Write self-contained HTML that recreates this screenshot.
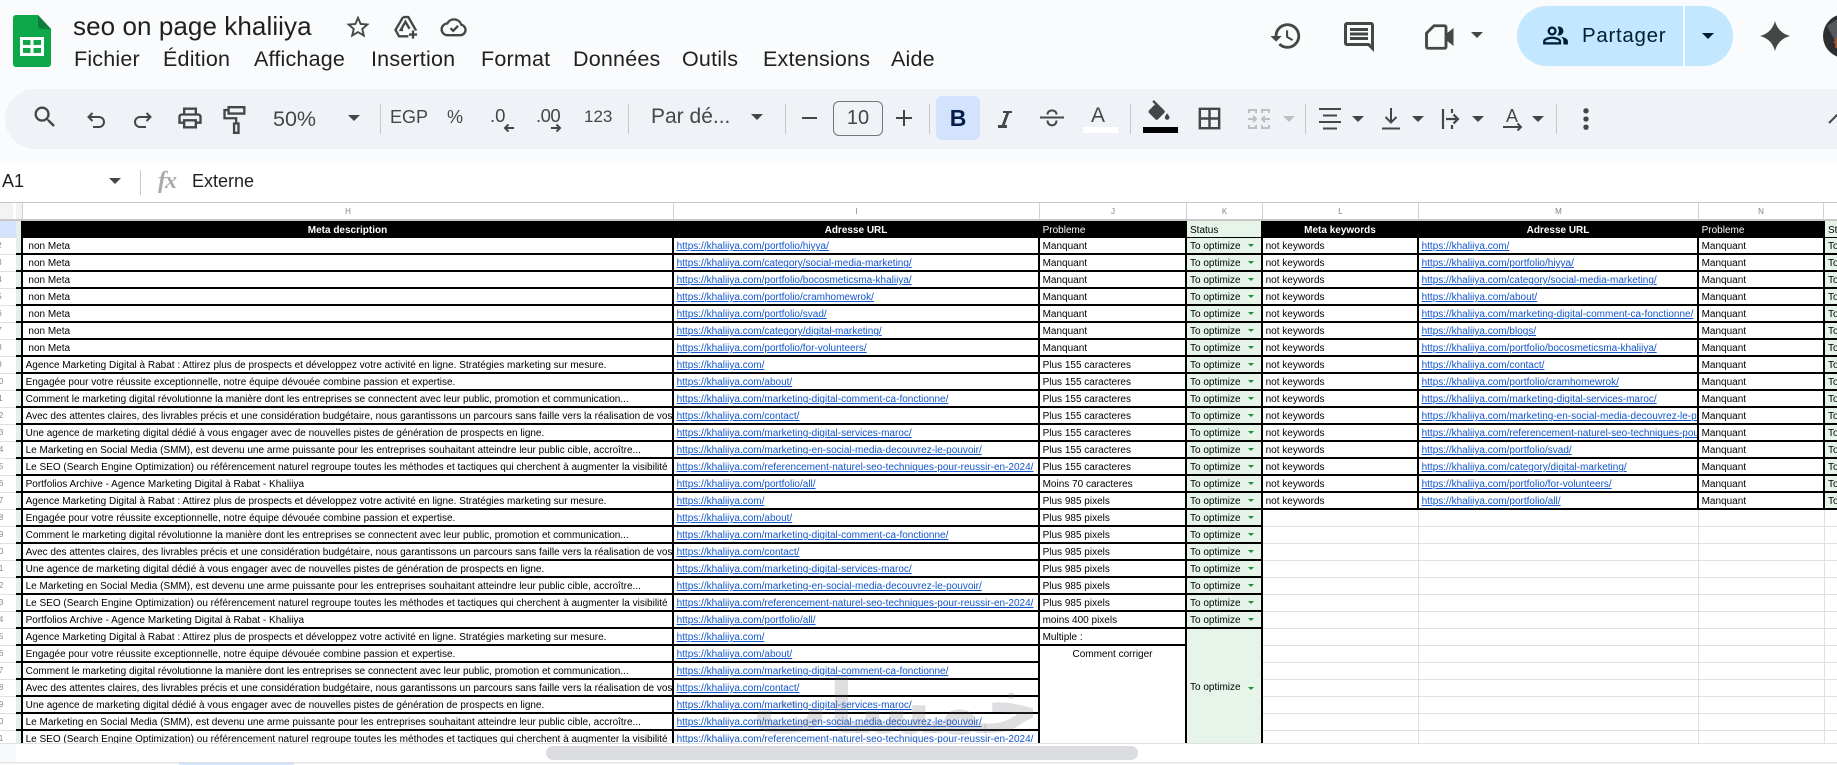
<!DOCTYPE html>
<html lang="fr"><head><meta charset="utf-8"><title>seo on page khaliiya</title>
<style>
*{box-sizing:border-box}
html,body{margin:0;padding:0;width:1837px;height:765px;overflow:hidden;background:#fff;font-family:"Liberation Sans",sans-serif;color:#1f1f1f}
.a{position:absolute;white-space:nowrap}
#top{position:absolute;left:0;top:0;width:1837px;height:161px;background:#f9fbfd}
#bar{position:absolute;left:5px;top:89px;width:1832px;height:60px;background:#eff3f8;border-radius:30px 0 0 30px}
.m{position:absolute;top:47px;font-size:21.5px;line-height:24px;letter-spacing:.2px;color:#1f1f1f}
svg{position:absolute;overflow:visible}
.f{fill:#444746}
.s{fill:none;stroke:#444746;stroke-width:2}
.c{position:absolute;width:0;height:0;border-left:6.5px solid transparent;border-right:6.5px solid transparent;border-top:6.5px solid #444746}
.sp{position:absolute;top:104px;width:1px;height:30px;background:#c7c7c7}
.t{position:absolute;color:#444746;line-height:24px;white-space:nowrap}
#ch{position:absolute;left:0;top:202px;width:1837px;height:19px;border-top:1px solid #c7c7c7;border-bottom:2px solid #c7c7c7;background:#fff}
.cl{position:absolute;top:0;height:16px;border-left:1px solid #d0d0d0;font-size:8px;line-height:17px;text-align:center;color:#7a8590}
#rh{position:absolute;left:0;top:221px;width:16px;height:522px;overflow:hidden;background:#fff}
#rh div{height:17px;border-bottom:1px solid #e0e0e0;font-size:8px;line-height:16px;color:#7d8a99;text-indent:-5.6px;overflow:hidden}
#rh div.o{text-indent:-2.8px}
#w{position:absolute;left:16px;top:221px;width:1821px;height:522px;overflow:hidden;background:#fff}
table{border-collapse:separate;border-spacing:0;table-layout:fixed;width:1909px;font-size:10px;line-height:13px;color:#000}
td{height:17px;padding:2px 0 0 2.6px;border-right:2px solid #000;border-bottom:2px solid #000;overflow:hidden;white-space:nowrap;vertical-align:top;position:relative}
td.g{padding:0;background:#e3f0e9}
td.hd{background:#000;color:#fff;border-bottom:0;font-weight:bold;text-align:center;padding:2px 0 0;line-height:15px}
td.hl{background:#000;color:#fff;border-bottom:0;font-weight:normal;text-align:left;line-height:15px}
td.hk{background:#e6f4ea;color:#000;border-bottom:1px solid #000;line-height:12px;padding:4px 0 0 3px}
td.k{background:#e6f4ea;line-height:12px;padding:3px 0 0 3px}
td.k i{position:absolute;right:7px;top:6px;width:0;height:0;border-left:3.2px solid transparent;border-right:3.2px solid transparent;border-top:3.5px solid #1e8e3e}
td.mk{vertical-align:middle;line-height:15px;padding:0 0 0 3px}
td.mk i{top:50%;margin-top:-1px}
td.n{padding-left:5.4px}
td.e{border-right:1px solid #e0e0e0;border-bottom:1px solid #e0e0e0}
td.cc{text-align:center;padding:2px 0 0}
a{color:#1155cc;text-decoration:underline}
</style></head><body>
<div id="top"></div><div id="bar"></div>

<!-- Logo -->
<svg style="left:13px;top:15px" width="38" height="52" viewBox="0 0 38 52"><path d="M3 0H25L38 14V49a3 3 0 0 1-3 3H3a3 3 0 0 1-3-3V3a3 3 0 0 1 3-3z" fill="#0ea84c"/><path d="M25 0L38 14H28a3 3 0 0 1-3-3z" fill="#0c7f3a"/><path d="M7 22H31V41H7z" fill="#fff"/><path d="M10 25H17.5V30H10zM20.500 25H28V30H20.500zM10 33H17.5V38H10zM20.500 33H28V38H20.500z" fill="#0ea84c"/></svg>
<div class="a" style="left:73px;top:10px;font-size:26px;line-height:32px;color:#1f1f1f;letter-spacing:.08px">seo on page khaliiya</div>
<svg style="left:344px;top:13px" width="28" height="28" viewBox="0 0 24 24"><path class="f" d="M22 9.240l-7.190-.62L12 2 9.190 8.630 2 9.240l5.460 4.730L5.820 21 12 17.270 18.180 21l-1.630-7.030L22 9.240zM12 15.400l-3.760 2.270 1-4.280-3.320-2.880 4.380-.38L12 6.100l1.710 4.040 4.380.38-3.320 2.880 1 4.280L12 15.400z"/></svg>
<svg style="left:392px;top:13px" width="28" height="28" viewBox="0 0 24 24"><path class="s" d="M9.500 3.500h4.500l6 10.500-1 0M9.500 3.500L3 14.500l3 5.500h8M9.500 3.500L6.800 8M9.500 14.500h-2l4-7 3.500 6M18 15v7M14.500 18.500h7"/></svg>
<svg style="left:440px;top:13px" width="28" height="28" viewBox="0 0 24 24"><path class="s" d="M6.500 19H17.500a4.500 4.500 0 0 0 .8-8.900A6.500 6.500 0 0 0 6.300 9 5 5 0 0 0 6.500 19zM9 13l2.300 2.300L15.500 11"/></svg>

<div class="m" style="left:74px">Fichier</div>
<div class="m" style="left:163px">Édition</div>
<div class="m" style="left:254px">Affichage</div>
<div class="m" style="left:371px">Insertion</div>
<div class="m" style="left:481px">Format</div>
<div class="m" style="left:573px">Données</div>
<div class="m" style="left:682px">Outils</div>
<div class="m" style="left:763px">Extensions</div>
<div class="m" style="left:891px">Aide</div>

<!-- right header -->
<svg style="left:1269px;top:19px" width="34" height="34" viewBox="0 0 24 24"><path class="f" d="M13 3c-4.970 0-9 4.030-9 9H1l3.890 3.890.07.14L9 12H6c0-3.870 3.130-7 7-7s7 3.130 7 7-3.130 7-7 7c-1.930 0-3.680-.79-4.940-2.060l-1.420 1.420C8.270 19.990 10.510 21 13 21c4.970 0 9-4.030 9-9s-4.030-9-9-9zm-1 5v5l4.280 2.540.72-1.210-3.500-2.080V8H12z"/></svg>
<svg style="left:1341px;top:19px" width="36" height="36" viewBox="0 0 24 24"><path class="f" d="M20 17.170L18.830 16H4V4h16v13.170zM20 2H4c-1.100 0-2 .9-2 2v12c0 1.100.9 2 2 2h14l4 4V4c0-1.100-.9-2-2-2z"/><path class="f" d="M6 12h12v2H6zm0-3h12v2H6zm0-3h12v2H6z"/></svg>
<svg style="left:1422px;top:19px" width="36" height="36" viewBox="0 0 24 24"><path class="s" style="stroke-width:1.900" d="M8 4.500H15a1 1 0 0 1 1 1V18.500a1 1 0 0 1-1 1H4a1 1 0 0 1-1-1V9.500z"/><path class="f" d="M16 10l5-4v12l-5-4z"/></svg>
<div class="c" style="left:1471px;top:32px"></div>

<div class="a" style="left:1517px;top:6px;width:216px;height:60px;border-radius:30px;background:#c2e7ff"></div>
<div class="a" style="left:1683px;top:6px;width:1.500px;height:60px;background:#f5fbff"></div>
<svg style="left:1542px;top:22px" width="27" height="27" viewBox="0 0 24 24"><path fill="#001d35" d="M16.670 13.130C18.040 14.060 19 15.320 19 17v3h4v-3c0-2.180-3.570-3.470-6.330-3.870zM15 12c2.210 0 4-1.790 4-4s-1.790-4-4-4c-.47 0-.91.1-1.330.24C14.500 5.270 15 6.580 15 8s-.5 2.730-1.330 3.760c.42.14.86.24 1.330.24zM9 12c2.210 0 4-1.790 4-4s-1.790-4-4-4-4 1.790-4 4 1.790 4 4 4zm0-6c1.100 0 2 .9 2 2s-.9 2-2 2-2-.9-2-2 .9-2 2-2zm0 7c-2.670 0-8 1.340-8 4v3h16v-3c0-2.660-5.330-4-8-4zm6 5H3v-.99C3.200 16.290 6.300 15 9 15s5.800 1.290 6 2v1z"/></svg>
<div class="a" style="left:1582px;top:22px;font-size:20.500px;line-height:28px;letter-spacing:.7px;color:#001d35">Partager</div>
<div class="c" style="left:1702px;top:33px;border-top-color:#001d35"></div>
<svg style="left:1760px;top:21px" width="30" height="30" viewBox="0 0 24 24"><path fill="#444746" d="M12 0Q14.500 9.500 24 12 14.500 14.500 12 24 9.500 14.500 0 12 9.500 9.500 12 0z"/></svg>
<svg style="left:1823px;top:14px" width="44" height="44" viewBox="0 0 44 44"><circle cx="22" cy="22" r="22" fill="#2c2e31"/><path d="M4 12l12-8 6 12-8 14z" fill="#55585c"/><path d="M10 28l8-6 2 12z" fill="#6a6d70"/><path d="M12 24h14v10H12z" fill="#a3512a"/></svg>

<!-- toolbar -->
<svg style="left:31px;top:103px" width="28" height="28" viewBox="0 0 24 24"><path class="f" d="M15.500 14h-.79l-.28-.27A6.471 6.471 0 0 0 16 9.500 6.500 6.500 0 1 0 9.500 16c1.610 0 3.090-.59 4.230-1.570l.27.28v.79l5 4.990L20.490 19l-4.990-5zm-6 0C7.010 14 5 11.990 5 9.500S7.010 5 9.500 5 14 7.010 14 9.500 11.990 14 9.500 14z"/></svg>
<svg style="left:84px;top:108px" width="24" height="24" viewBox="0 0 24 24"><path class="s" d="M8.500 5L4.500 9l4 4M4.500 9H15a5 5 0 0 1 0 10H9"/></svg>
<svg style="left:131px;top:108px" width="24" height="24" viewBox="0 0 24 24"><path class="s" d="M15.500 5l4 4-4 4M19.500 9H9a5 5 0 0 0 0 10h6"/></svg>
<svg style="left:176px;top:104px" width="28" height="28" viewBox="0 0 24 24"><path class="f" d="M19 8h-1V3H6v5H5c-1.660 0-3 1.340-3 3v6h4v4h12v-4h4v-6c0-1.660-1.340-3-3-3zM8 5h8v3H8V5zm8 12v2H8v-4h8v2zm2-2v-2H6v2H4v-4c0-.55.45-1 1-1h14c.55 0 1 .45 1 1v4h-2z"/></svg>
<svg style="left:221px;top:106px" width="28" height="28" viewBox="0 0 24 24"><path class="s" d="M6.500 1H20V6.500H6.500zM6.500 3.500H3V10.500H13V15M11.200 15H15V23H11.200z"/></svg>
<div class="t" style="left:273px;top:107px;font-size:21.500px">50%</div>
<div class="c" style="left:348px;top:115px"></div>
<div class="sp" style="left:380px"></div>
<div class="t" style="left:390px;top:105px;font-size:18px">EGP</div>
<div class="t" style="left:447px;top:105px;font-size:18px">%</div>
<div class="t" style="left:490px;top:104px;font-size:18.500px">.0</div>
<svg style="left:503px;top:122px" width="12" height="12" viewBox="0 0 12 12"><path class="s" d="M11 6H2M5.500 2.500L2 6l3.500 3.500"/></svg>
<div class="t" style="left:536px;top:104px;font-size:18.500px;letter-spacing:-.5px">.00</div>
<svg style="left:550px;top:122px" width="12" height="12" viewBox="0 0 12 12"><path class="s" d="M1 6h9M6.500 2.500L10 6 6.500 9.500"/></svg>
<div class="t" style="left:584px;top:105px;font-size:17px">123</div>
<div class="sp" style="left:628px"></div>
<div class="t" style="left:651px;top:105px;font-size:21px">Par dé...</div>
<div class="c" style="left:751px;top:114px"></div>
<div class="sp" style="left:785px"></div>
<div class="a" style="left:802px;top:117px;width:15px;height:2px;background:#444746"></div>
<div class="a" style="left:833px;top:101px;width:50px;height:35px;border:1px solid #747775;border-radius:6px;text-align:center;font-size:20px;line-height:33px;color:#444746">10</div>
<svg style="left:895px;top:109px" width="18" height="18" viewBox="0 0 18 18"><path class="s" d="M1 9h16M9 1v16"/></svg>
<div class="sp" style="left:929px"></div>
<div class="a" style="left:936px;top:96px;width:44px;height:44px;border-radius:6px;background:#d3e3fd;text-align:center;font-size:23px;font-weight:bold;line-height:44px;color:#041e49">B</div>
<svg style="left:993px;top:107px" width="24" height="24" viewBox="0 0 24 24"><path class="f" d="M10 4v2h3.210L8.790 18H5v3h9v-3h-2.210L16.210 6H19V4z"/></svg>
<svg style="left:1040px;top:106px" width="24" height="24" viewBox="0 0 24 24"><path class="s" d="M0 11.500H24M7.500 8.500C7.500 3 16.500 3 16.500 8.500M7.500 14.500C7.500 21 16.500 21 16.500 14.500"/></svg>
<div class="t" style="left:1091px;top:104px;font-size:21px">A</div>
<div class="a" style="left:1083px;top:127px;width:35px;height:6px;background:#fff"></div>
<div class="sp" style="left:1130px"></div>
<svg style="left:1145px;top:100px" width="28" height="28" viewBox="0 0 24 24"><path class="f" d="M16.560 8.940L7.620 0 6.210 1.410l2.380 2.380-5.150 5.150c-.59.59-.59 1.540 0 2.120l5.500 5.500c.29.29.68.44 1.060.44s.77-.15 1.060-.44l5.500-5.500c.59-.58.59-1.530 0-2.120zM19 11.500s-2 2.170-2 3.500c0 1.100.9 2 2 2s2-.9 2-2c0-1.330-2-3.500-2-3.500z"/></svg>
<div class="a" style="left:1143px;top:127px;width:35px;height:6px;background:#000"></div>
<svg style="left:1195px;top:104px" width="29" height="29" viewBox="0 0 24 24"><path class="f" d="M3 3v18h18V3H3zm8 16H5v-6h6v6zm0-8H5V5h6v6zm8 8h-6v-6h6v6zm0-8h-6V5h6v6z"/></svg>
<svg style="left:1247px;top:107px" width="24" height="24" viewBox="0 0 24 24"><path fill="none" stroke="#bdbfc1" stroke-width="2" d="M2 6V3h7v3M2 18v3h7v-3M22 6V3h-7v3M22 18v3h-7v-3M1 12h8M6 9l3 3-3 3M23 12h-8M18 9l-3 3 3 3"/></svg>
<div class="c" style="left:1283px;top:116px;border-top-color:#bdbfc1"></div>
<div class="sp" style="left:1305px"></div>
<svg style="left:1319px;top:108px" width="22" height="22" viewBox="0 0 22 22"><path class="s" d="M0 1H22M4 7.500H18M0 14H22M4 20.500H18"/></svg>
<div class="c" style="left:1352px;top:116px"></div>
<svg style="left:1382px;top:108px" width="18" height="22" viewBox="0 0 18 22"><path class="s" d="M9 0V14M3.500 9L9 14.500 14.500 9M0 20.500H18"/></svg>
<div class="c" style="left:1412px;top:116px"></div>
<svg style="left:1442px;top:109px" width="18" height="20" viewBox="0 0 18 20"><path class="s" style="stroke-width:2.200" d="M1 0V20M10 0V4M10 16V20M4 10H16M11.500 5.500L16 10l-4.500 4.500"/></svg>
<div class="c" style="left:1472px;top:116px"></div>
<div class="t" style="left:1506px;top:104px;font-size:18px">A</div>
<svg style="left:1503px;top:122px" width="20" height="12" viewBox="0 0 20 12"><path class="s" d="M0 5H18M14.500 1.500L18 5l-3.500 3.500"/></svg>
<div class="c" style="left:1532px;top:116px"></div>
<div class="sp" style="left:1556px"></div>
<svg style="left:1572px;top:105px" width="28" height="28" viewBox="0 0 24 24"><circle cx="12" cy="5" r="2.300" class="f"/><circle cx="12" cy="12" r="2.300" class="f"/><circle cx="12" cy="19" r="2.300" class="f"/></svg>
<svg style="left:1825px;top:111px" width="20" height="14" viewBox="0 0 20 14"><path class="s" d="M4 12L12 4l8 8"/></svg>

<!-- formula bar -->
<div class="a" style="left:2px;top:170px;font-size:18px;line-height:22px;color:#1f1f1f">A1</div>
<div class="c" style="left:109px;top:178px"></div>
<div class="a" style="left:139.500px;top:170px;width:1.500px;height:25px;background:#c7c7c7"></div>
<div class="a" style="left:158px;top:168px;font-family:'Liberation Serif',serif;font-style:italic;font-weight:bold;font-size:24px;line-height:26px;color:#aaa;letter-spacing:-1px">fx</div>
<div class="a" style="left:192px;top:170px;font-size:18px;line-height:22px;color:#1f1f1f">Externe</div>

<!-- column header -->
<div id="ch">
<div class="a" style="left:0;top:0;width:13px;height:16px;background:#f1f3f4"></div>
<div class="a" style="left:16px;top:0;width:6px;height:16px;background:#f1f3f4"></div>
<div class="cl" style="left:22px;width:651px">H</div>
<div class="cl" style="left:673px;width:366px">I</div>
<div class="cl" style="left:1039px;width:147px">J</div>
<div class="cl" style="left:1186px;width:76px">K</div>
<div class="cl" style="left:1262px;width:156px">L</div>
<div class="cl" style="left:1418px;width:280px">M</div>
<div class="cl" style="left:1698px;width:125px">N</div>
<div class="cl" style="left:1823px;width:14px"></div>
</div>

<!-- row header -->
<div id="rh">
<div style="background:#d3e3fd"></div>
<div class="o">2</div><div class="o">3</div><div class="o">4</div><div class="o">5</div><div class="o">6</div><div class="o">7</div><div class="o">8</div><div class="o">9</div><div>10</div><div>11</div><div>12</div><div>13</div><div>14</div><div>15</div><div>16</div><div>17</div><div>18</div><div>19</div><div>20</div><div>21</div><div>22</div><div>23</div><div>24</div><div>25</div><div>26</div><div>27</div><div>28</div><div>29</div><div>30</div><div>31</div>
</div>

<div id="w"><table>
<colgroup><col style="width:7px"><col style="width:651px"><col style="width:366px"><col style="width:147px"><col style="width:76px"><col style="width:156px"><col style="width:280px"><col style="width:126px"><col style="width:100px"></colgroup>
<tr><td class="g" style="border-bottom:0"></td><td class="hd">Meta description</td><td class="hd">Adresse URL</td><td class="hl">Probleme</td><td class="hk">Status</td><td class="hd">Meta keywords</td><td class="hd">Adresse URL</td><td class="hl">Probleme</td><td class="hk">Status</td></tr>
<tr><td class="g"></td><td class="n">non Meta</td><td><a>https://khaliiya.com/portfolio/hiyya/</a></td><td>Manquant</td><td class="k">To optimize<i></i></td><td>not keywords</td><td><a>https://khaliiya.com/</a></td><td>Manquant</td><td class="k">To optimize<i></i></td></tr>
<tr><td class="g"></td><td class="n">non Meta</td><td><a>https://khaliiya.com/category/social-media-marketing/</a></td><td>Manquant</td><td class="k">To optimize<i></i></td><td>not keywords</td><td><a>https://khaliiya.com/portfolio/hiyya/</a></td><td>Manquant</td><td class="k">To optimize<i></i></td></tr>
<tr><td class="g"></td><td class="n">non Meta</td><td><a>https://khaliiya.com/portfolio/bocosmeticsma-khaliiya/</a></td><td>Manquant</td><td class="k">To optimize<i></i></td><td>not keywords</td><td><a>https://khaliiya.com/category/social-media-marketing/</a></td><td>Manquant</td><td class="k">To optimize<i></i></td></tr>
<tr><td class="g"></td><td class="n">non Meta</td><td><a>https://khaliiya.com/portfolio/cramhomewrok/</a></td><td>Manquant</td><td class="k">To optimize<i></i></td><td>not keywords</td><td><a>https://khaliiya.com/about/</a></td><td>Manquant</td><td class="k">To optimize<i></i></td></tr>
<tr><td class="g"></td><td class="n">non Meta</td><td><a>https://khaliiya.com/portfolio/svad/</a></td><td>Manquant</td><td class="k">To optimize<i></i></td><td>not keywords</td><td><a>https://khaliiya.com/marketing-digital-comment-ca-fonctionne/</a></td><td>Manquant</td><td class="k">To optimize<i></i></td></tr>
<tr><td class="g"></td><td class="n">non Meta</td><td><a>https://khaliiya.com/category/digital-marketing/</a></td><td>Manquant</td><td class="k">To optimize<i></i></td><td>not keywords</td><td><a>https://khaliiya.com/blogs/</a></td><td>Manquant</td><td class="k">To optimize<i></i></td></tr>
<tr><td class="g"></td><td class="n">non Meta</td><td><a>https://khaliiya.com/portfolio/for-volunteers/</a></td><td>Manquant</td><td class="k">To optimize<i></i></td><td>not keywords</td><td><a>https://khaliiya.com/portfolio/bocosmeticsma-khaliiya/</a></td><td>Manquant</td><td class="k">To optimize<i></i></td></tr>
<tr><td class="g"></td><td>Agence Marketing Digital à Rabat : Attirez plus de prospects et développez votre activité en ligne. Stratégies marketing sur mesure.</td><td><a>https://khaliiya.com/</a></td><td>Plus 155 caracteres</td><td class="k">To optimize<i></i></td><td>not keywords</td><td><a>https://khaliiya.com/contact/</a></td><td>Manquant</td><td class="k">To optimize<i></i></td></tr>
<tr><td class="g"></td><td>Engagée pour votre réussite exceptionnelle, notre équipe dévouée combine passion et expertise.</td><td><a>https://khaliiya.com/about/</a></td><td>Plus 155 caracteres</td><td class="k">To optimize<i></i></td><td>not keywords</td><td><a>https://khaliiya.com/portfolio/cramhomewrok/</a></td><td>Manquant</td><td class="k">To optimize<i></i></td></tr>
<tr><td class="g"></td><td>Comment le marketing digital révolutionne la manière dont les entreprises se connectent avec leur public, promotion et communication...</td><td><a>https://khaliiya.com/marketing-digital-comment-ca-fonctionne/</a></td><td>Plus 155 caracteres</td><td class="k">To optimize<i></i></td><td>not keywords</td><td><a>https://khaliiya.com/marketing-digital-services-maroc/</a></td><td>Manquant</td><td class="k">To optimize<i></i></td></tr>
<tr><td class="g"></td><td>Avec des attentes claires, des livrables précis et une considération budgétaire, nous garantissons un parcours sans faille vers la réalisation de vos objectifs.</td><td><a>https://khaliiya.com/contact/</a></td><td>Plus 155 caracteres</td><td class="k">To optimize<i></i></td><td>not keywords</td><td><a>https://khaliiya.com/marketing-en-social-media-decouvrez-le-pouvoir/</a></td><td>Manquant</td><td class="k">To optimize<i></i></td></tr>
<tr><td class="g"></td><td>Une agence de marketing digital dédié à vous engager avec de nouvelles pistes de génération de prospects en ligne.</td><td><a>https://khaliiya.com/marketing-digital-services-maroc/</a></td><td>Plus 155 caracteres</td><td class="k">To optimize<i></i></td><td>not keywords</td><td><a>https://khaliiya.com/referencement-naturel-seo-techniques-pour-reussir-en-2024/</a></td><td>Manquant</td><td class="k">To optimize<i></i></td></tr>
<tr><td class="g"></td><td>Le Marketing en Social Media (SMM), est devenu une arme puissante pour les entreprises souhaitant atteindre leur public cible, accroître...</td><td><a>https://khaliiya.com/marketing-en-social-media-decouvrez-le-pouvoir/</a></td><td>Plus 155 caracteres</td><td class="k">To optimize<i></i></td><td>not keywords</td><td><a>https://khaliiya.com/portfolio/svad/</a></td><td>Manquant</td><td class="k">To optimize<i></i></td></tr>
<tr><td class="g"></td><td>Le SEO (Search Engine Optimization) ou référencement naturel regroupe toutes les méthodes et tactiques qui cherchent à augmenter la visibilité</td><td><a>https://khaliiya.com/referencement-naturel-seo-techniques-pour-reussir-en-2024/</a></td><td>Plus 155 caracteres</td><td class="k">To optimize<i></i></td><td>not keywords</td><td><a>https://khaliiya.com/category/digital-marketing/</a></td><td>Manquant</td><td class="k">To optimize<i></i></td></tr>
<tr><td class="g"></td><td>Portfolios Archive - Agence Marketing Digital à Rabat - Khaliiya</td><td><a>https://khaliiya.com/portfolio/all/</a></td><td>Moins 70 caracteres</td><td class="k">To optimize<i></i></td><td>not keywords</td><td><a>https://khaliiya.com/portfolio/for-volunteers/</a></td><td>Manquant</td><td class="k">To optimize<i></i></td></tr>
<tr><td class="g"></td><td>Agence Marketing Digital à Rabat : Attirez plus de prospects et développez votre activité en ligne. Stratégies marketing sur mesure.</td><td><a>https://khaliiya.com/</a></td><td>Plus 985 pixels</td><td class="k">To optimize<i></i></td><td>not keywords</td><td><a>https://khaliiya.com/portfolio/all/</a></td><td>Manquant</td><td class="k">To optimize<i></i></td></tr>
<tr><td class="g"></td><td>Engagée pour votre réussite exceptionnelle, notre équipe dévouée combine passion et expertise.</td><td><a>https://khaliiya.com/about/</a></td><td>Plus 985 pixels</td><td class="k">To optimize<i></i></td><td class="e"></td><td class="e"></td><td class="e"></td><td class="e"></td></tr>
<tr><td class="g"></td><td>Comment le marketing digital révolutionne la manière dont les entreprises se connectent avec leur public, promotion et communication...</td><td><a>https://khaliiya.com/marketing-digital-comment-ca-fonctionne/</a></td><td>Plus 985 pixels</td><td class="k">To optimize<i></i></td><td class="e"></td><td class="e"></td><td class="e"></td><td class="e"></td></tr>
<tr><td class="g"></td><td>Avec des attentes claires, des livrables précis et une considération budgétaire, nous garantissons un parcours sans faille vers la réalisation de vos objectifs.</td><td><a>https://khaliiya.com/contact/</a></td><td>Plus 985 pixels</td><td class="k">To optimize<i></i></td><td class="e"></td><td class="e"></td><td class="e"></td><td class="e"></td></tr>
<tr><td class="g"></td><td>Une agence de marketing digital dédié à vous engager avec de nouvelles pistes de génération de prospects en ligne.</td><td><a>https://khaliiya.com/marketing-digital-services-maroc/</a></td><td>Plus 985 pixels</td><td class="k">To optimize<i></i></td><td class="e"></td><td class="e"></td><td class="e"></td><td class="e"></td></tr>
<tr><td class="g"></td><td>Le Marketing en Social Media (SMM), est devenu une arme puissante pour les entreprises souhaitant atteindre leur public cible, accroître...</td><td><a>https://khaliiya.com/marketing-en-social-media-decouvrez-le-pouvoir/</a></td><td>Plus 985 pixels</td><td class="k">To optimize<i></i></td><td class="e"></td><td class="e"></td><td class="e"></td><td class="e"></td></tr>
<tr><td class="g"></td><td>Le SEO (Search Engine Optimization) ou référencement naturel regroupe toutes les méthodes et tactiques qui cherchent à augmenter la visibilité</td><td><a>https://khaliiya.com/referencement-naturel-seo-techniques-pour-reussir-en-2024/</a></td><td>Plus 985 pixels</td><td class="k">To optimize<i></i></td><td class="e"></td><td class="e"></td><td class="e"></td><td class="e"></td></tr>
<tr><td class="g"></td><td>Portfolios Archive - Agence Marketing Digital à Rabat - Khaliiya</td><td><a>https://khaliiya.com/portfolio/all/</a></td><td>moins 400 pixels</td><td class="k">To optimize<i></i></td><td class="e"></td><td class="e"></td><td class="e"></td><td class="e"></td></tr>
<tr><td class="g"></td><td>Agence Marketing Digital à Rabat : Attirez plus de prospects et développez votre activité en ligne. Stratégies marketing sur mesure.</td><td><a>https://khaliiya.com/</a></td><td>Multiple :</td><td class="k mk" rowspan="7">To optimize<i></i></td><td class="e"></td><td class="e"></td><td class="e"></td><td class="e"></td></tr>
<tr><td class="g"></td><td>Engagée pour votre réussite exceptionnelle, notre équipe dévouée combine passion et expertise.</td><td><a>https://khaliiya.com/about/</a></td><td class="cc" rowspan="6">Comment corriger</td><td class="e"></td><td class="e"></td><td class="e"></td><td class="e"></td></tr>
<tr><td class="g"></td><td>Comment le marketing digital révolutionne la manière dont les entreprises se connectent avec leur public, promotion et communication...</td><td><a>https://khaliiya.com/marketing-digital-comment-ca-fonctionne/</a></td><td class="e"></td><td class="e"></td><td class="e"></td><td class="e"></td></tr>
<tr><td class="g"></td><td>Avec des attentes claires, des livrables précis et une considération budgétaire, nous garantissons un parcours sans faille vers la réalisation de vos objectifs.</td><td><a>https://khaliiya.com/contact/</a></td><td class="e"></td><td class="e"></td><td class="e"></td><td class="e"></td></tr>
<tr><td class="g"></td><td>Une agence de marketing digital dédié à vous engager avec de nouvelles pistes de génération de prospects en ligne.</td><td><a>https://khaliiya.com/marketing-digital-services-maroc/</a></td><td class="e"></td><td class="e"></td><td class="e"></td><td class="e"></td></tr>
<tr><td class="g"></td><td>Le Marketing en Social Media (SMM), est devenu une arme puissante pour les entreprises souhaitant atteindre leur public cible, accroître...</td><td><a>https://khaliiya.com/marketing-en-social-media-decouvrez-le-pouvoir/</a></td><td class="e"></td><td class="e"></td><td class="e"></td><td class="e"></td></tr>
<tr><td class="g"></td><td>Le SEO (Search Engine Optimization) ou référencement naturel regroupe toutes les méthodes et tactiques qui cherchent à augmenter la visibilité</td><td><a>https://khaliiya.com/referencement-naturel-seo-techniques-pour-reussir-en-2024/</a></td><td class="e"></td><td class="e"></td><td class="e"></td><td class="e"></td></tr>
</table></div>

<!-- scrollbar area -->
<div class="a" style="left:0;top:743px;width:1837px;height:19px;background:#fff;border-top:1px solid #e0e0e0"></div>
<div class="a" style="left:0;top:744px;width:16px;height:18px;background:#f8f9fa"></div>
<div class="a" style="left:546px;top:746px;width:592px;height:14px;border-radius:7px;background:#dadce0"></div>
<div class="a" style="left:0;top:762px;width:1837px;height:1px;background:#e0e0e0"></div>
<div class="a" style="left:0;top:763px;width:1837px;height:2px;background:#f6f7f8"></div>
<div class="a" style="left:179px;top:763px;width:115px;height:2px;background:#d3e3fd"></div>

<!-- watermark -->
<div class="a" dir="rtl" style="left:796px;top:662px;width:244px;text-align:center;font-family:'DejaVu Sans',sans-serif;font-weight:bold;font-size:76px;line-height:90px;color:rgba(110,110,120,.22)">خمسات</div>
</body></html>
